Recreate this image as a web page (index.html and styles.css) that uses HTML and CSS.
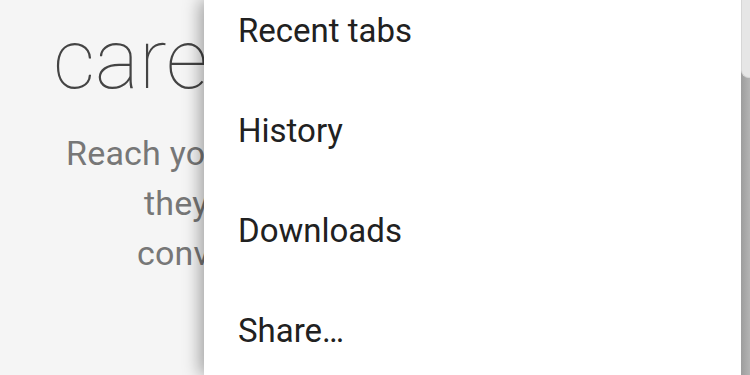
FILE: index.html
```html
<!DOCTYPE html>
<html lang="en">
<head>
<meta charset="utf-8">
<title>Menu</title>
<link rel="stylesheet" href="styles.css">
</head>
<body>
<main class="page">
  <h1 class="hero-title">care</h1>
  <p class="hero-text">
    <span class="line line-1">Reach yo</span>
    <span class="line line-2">they</span>
    <span class="line line-3">conv</span>
  </p>
</main>
<nav class="menu">
  <ul class="menu-list">
    <li class="menu-item">Recent tabs</li>
    <li class="menu-item">History</li>
    <li class="menu-item">Downloads</li>
    <li class="menu-item">Share…</li>
  </ul>
</nav>
<div class="edge">
  <div class="edge-top"></div>
</div>
</body>
</html>
```
FILE: styles.css
```css
html, body {
  margin: 0;
  padding: 0;
  width: 750px;
  height: 375px;
  overflow: hidden;
  background: #f5f5f5;
  font-family: Roboto, "Noto Sans", sans-serif;
}
.page {
  width: 204px;
  height: 375px;
  padding-top: 18px;
  box-sizing: border-box;
  overflow: hidden;
  white-space: nowrap;
}
.hero-title {
  margin: 0;
  padding-left: 53px;
  font-size: 83px;
  line-height: 83px;
  font-weight: 100;
  color: #444;
}
.hero-text {
  margin: 27px 0 0;
  font-size: 34px;
  line-height: 50px;
  letter-spacing: 0.2px;
  color: #777;
}
.line {
  display: block;
}
.line-1 { padding-left: 66px; }
.line-2 { padding-left: 144px; }
.line-3 { padding-left: 137px; }
.menu {
  position: absolute;
  left: 204px;
  top: 0;
  width: 537px;
  height: 375px;
  background: #fff;
  box-shadow: -4px 0 16px rgba(0, 0, 0, 0.35);
  overflow: hidden;
}
.menu-list {
  list-style: none;
  margin: -19px 0 0;
  padding: 0 0 0 34px;
}
.menu-item {
  height: 100px;
  line-height: 100px;
  font-size: 33px;
  color: #212121;
}
.edge {
  position: absolute;
  right: 0;
  top: 0;
  width: 9px;
  height: 375px;
  background: linear-gradient(to right, #9d9d9d, #b4b4b4);
}
.edge-top {
  height: 77px;
  background: #e6e6e6;
  border-left: 1px solid #d6d6d6;
  border-bottom: 1px solid #d6d6d6;
  border-bottom-left-radius: 8px;
}
```
